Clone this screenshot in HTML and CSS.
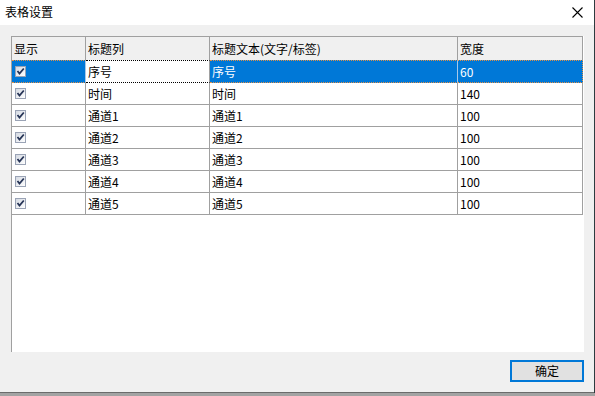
FILE: index.html
```html
<!DOCTYPE html>
<html lang="zh-CN">
<head>
<meta charset="utf-8">
<title>表格设置</title>
<link rel="stylesheet" href="styles.css">
</head>
<body>
<div class="window">
  <div class="titlebar">
    <span class="title">表格设置</span>
    <svg class="close" width="11" height="11" viewBox="0 0 11 11"><path d="M0.5 0.5 L10.5 10.5 M10.5 0.5 L0.5 10.5" stroke="#000" stroke-width="1.1" fill="none"/></svg>
  </div>
  <div class="content">
    <div class="grid">
      <div class="table">
        <div class="row head">
          <div class="cell">显示</div>
          <div class="cell">标题列</div>
          <div class="cell">标题文本(文字/标签)</div>
          <div class="cell">宽度</div>
        </div>
        <div class="row selected">
          <div class="cell"><span class="cb"></span></div>
          <div class="cell edit">序号</div>
          <div class="cell">序号</div>
          <div class="cell last">60</div>
        </div>
        <div class="row">
          <div class="cell"><span class="cb"></span></div>
          <div class="cell">时间</div>
          <div class="cell">时间</div>
          <div class="cell">140</div>
        </div>
        <div class="row">
          <div class="cell"><span class="cb"></span></div>
          <div class="cell">通道1</div>
          <div class="cell">通道1</div>
          <div class="cell">100</div>
        </div>
        <div class="row">
          <div class="cell"><span class="cb"></span></div>
          <div class="cell">通道2</div>
          <div class="cell">通道2</div>
          <div class="cell">100</div>
        </div>
        <div class="row">
          <div class="cell"><span class="cb"></span></div>
          <div class="cell">通道3</div>
          <div class="cell">通道3</div>
          <div class="cell">100</div>
        </div>
        <div class="row">
          <div class="cell"><span class="cb"></span></div>
          <div class="cell">通道4</div>
          <div class="cell">通道4</div>
          <div class="cell">100</div>
        </div>
        <div class="row">
          <div class="cell"><span class="cb"></span></div>
          <div class="cell">通道5</div>
          <div class="cell">通道5</div>
          <div class="cell">100</div>
        </div>
      </div>
    </div>
    <div class="footer">
      <button class="btn">确定</button>
    </div>
  </div>
</div>
</body>
</html>
```
FILE: styles.css
```css
html, body {
  margin: 0;
  padding: 0;
}
body {
  width: 595px;
  height: 396px;
  background: #a3a3a3;
  font-family: "Noto Sans CJK SC", "Microsoft YaHei", sans-serif;
  font-size: 12px;
  color: #000;
  overflow: hidden;
}
.window {
  width: 594px;
  height: 392px;
  background: #f0f0f0;
  border-bottom: 1px solid #6b6b6b;
  box-shadow: 1px 0 0 #2d3b40;
  display: flex;
  flex-direction: column;
}
.titlebar {
  height: 25px;
  background: #fff;
  display: flex;
  align-items: center;
  justify-content: space-between;
  padding: 0 11px 1px 5px;
  box-sizing: border-box;
  flex: none;
}
.title {
  font-size: 12px;
  line-height: 14px;
}
.close {
  display: block;
  margin-top: 1px;
}
.content {
  flex: 1;
  display: flex;
  flex-direction: column;
  padding: 11px 10px 0 11px;
}
.grid {
  height: 316px;
  width: 573px;
  background: #fff;
  border-left: 1px solid #a0a0a0;
  box-sizing: border-box;
  flex: none;
}
.table {
  display: grid;
  grid-template-columns: 74px 124px 248px 125px;
  width: 571px;
}
.row {
  display: contents;
}
.cell {
  box-sizing: border-box;
  height: 22px;
  border-right: 1px solid #a0a0a0;
  border-bottom: 1px solid #a0a0a0;
  padding-left: 2px;
  display: flex;
  align-items: center;
  white-space: nowrap;
  line-height: 14px;
}
.head .cell {
  height: 25px;
  background: #f0f0f0;
  border-top: 1px solid #a0a0a0;
  padding-top: 1px;
}
.selected .cell {
  background: #0078d7;
  color: #fff;
  border-top: 1px dotted #e09048;
  border-bottom: 1px dotted #e09048;
  border-right: 1px solid #a8c8e8;
  margin-top: -1px;
  height: 23px;
}
.selected .cell.edit {
  background: #fff;
  color: #000;
  border-top: 1px dotted #000;
  border-bottom: 1px dotted #000;
  border-right: 1px solid #a0a0a0;
}
.selected .cell.last {
  border-right: 1px dotted #e09048;
}
.cb {
  display: block;
  width: 11px;
  height: 11px;
  margin-left: 1px;
  box-sizing: border-box;
  border: 1px solid #9aa3b5;
  background:
    url("data:image/svg+xml;utf8,<svg xmlns='http://www.w3.org/2000/svg' width='9' height='9' viewBox='0 0 9 9'><path d='M1.5 4 L3.5 6.5 L7.8 1.5' stroke='%23263456' stroke-width='1.8' fill='none'/></svg>") center/9px 9px no-repeat,
    linear-gradient(135deg, #d4d9e2, #ffffff);
}
.footer {
  display: flex;
  justify-content: flex-end;
  padding-top: 8px;
}
.btn {
  width: 74px;
  height: 22px;
  box-sizing: border-box;
  border: 2px solid #0078d7;
  background: #e1e1e1;
  font-family: "Noto Sans CJK SC", "Microsoft YaHei", sans-serif;
  font-size: 12px;
  color: #000;
  padding: 0;
  line-height: 14px;
}
```
